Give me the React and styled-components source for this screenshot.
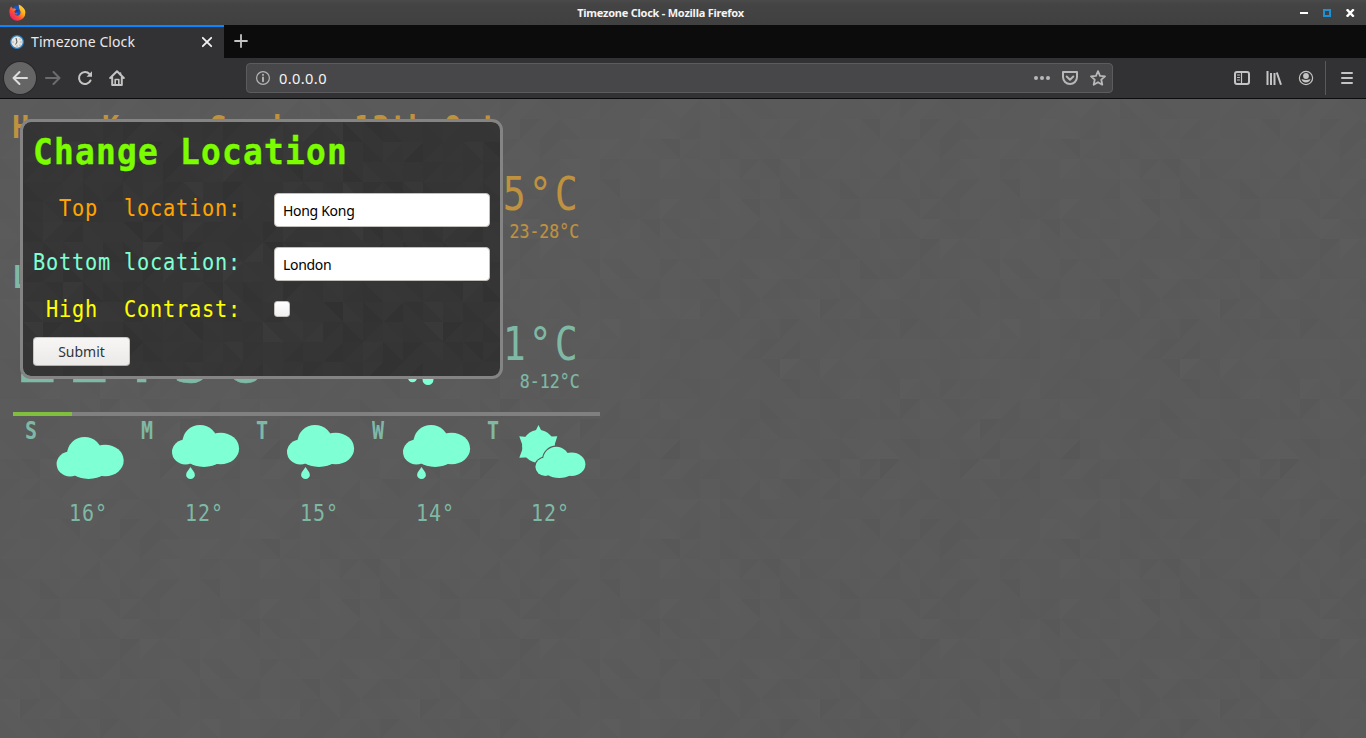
import React from "react";
import styled, { createGlobalStyle } from "styled-components";

const MONO = '"DejaVu Sans Mono", "Liberation Mono", monospace';
const SANS = '"Noto Sans", "Open Sans", sans-serif';

/* Seeded mosaic of 20px squares and triangles, tiled every 400px. */
function mosaic(seed, strength, size) {
  let s = seed;
  const rnd = () => {
    s = (s * 1664525 + 1013904223) % 4294967296;
    return s / 4294967296;
  };
  let shapes = "";
  for (let y = 0; y < size; y += 20) {
    for (let x = 0; x < size; x += 20) {
      const corners = [[x, y], [x + 20, y], [x + 20, y + 20], [x, y + 20]];
      const skip = Math.floor(rnd() * 4);
      const tri = corners.filter((_, i) => i !== skip).map((p) => p.join(",")).join(" ");
      const a = (rnd() * strength).toFixed(3);
      const b = (rnd() * strength * 0.45).toFixed(3);
      const tone = rnd() > 0.45 ? "#000" : "#fff";
      shapes += `<rect x="${x}" y="${y}" width="20" height="20" opacity="${b}"/>`;
      shapes += `<polygon points="${tri}" fill="${tone}" opacity="${tone === "#fff" ? (a * 0.3).toFixed(3) : a}"/>`;
    }
  }
  const svg = `<svg xmlns="http://www.w3.org/2000/svg" width="${size}" height="${size}" shape-rendering="crispEdges">${shapes}</svg>`;
  return `url("data:image/svg+xml,${encodeURIComponent(svg)}")`;
}

const pageMosaic = mosaic(77, 0.026, 400);
const dialogMosaic = mosaic(77, 0.065, 400);

const GlobalStyle = createGlobalStyle`
  * { box-sizing: border-box; }
  body { margin: 0; background: #5a5a5a; overflow: hidden; font-family: ${SANS}; }
`;

const Window = styled.div`
  width: 1366px;
  height: 738px;
  display: flex;
  flex-direction: column;
`;

const TitleBar = styled.header`
  height: 25px;
  flex: none;
  display: grid;
  grid-template-columns: 57px 1fr 100px;
  align-items: center;
  padding: 0 11px 0 9px;
  background: linear-gradient(#4a4a4a, #444 15%, #404040);
`;

const WindowTitle = styled.div`
  text-align: center;
  font: 700 11px/25px ${SANS};
  color: #f4f4f4;
  letter-spacing: -0.24px;
`;

const WindowButtons = styled.div`
  display: flex;
  justify-content: flex-end;
  gap: 14px;
`;

const TabStrip = styled.nav`
  height: 33px;
  flex: none;
  display: flex;
  background: #0c0c0c;
`;

const Tab = styled.div`
  width: 224px;
  display: flex;
  align-items: center;
  padding: 0 11px 2px 10px;
  border-top: 2px solid #0a84ff;
  background: #323234;
  color: #e9e9ea;
  font: 14px/29px ${SANS};
`;

const TabLabel = styled.span`
  flex: 1;
  margin-left: 7px;
  letter-spacing: 0.1px;
`;

const NewTab = styled.div`
  width: 34px;
  display: grid;
  place-items: center;
  padding-bottom: 2px;
`;

const Toolbar = styled.div`
  height: 41px;
  flex: none;
  display: flex;
  align-items: center;
  padding: 0 3px 0 4px;
  background: #323234;
  border-bottom: 1px solid #0c0c0d;
`;

const BackButton = styled.div`
  width: 32px;
  height: 32px;
  margin-right: 1px;
  border-radius: 50%;
  display: grid;
  place-items: center;
  background: #656566;
  box-shadow: 0 0 0 1px #29292b;
`;

const ToolIcon = styled.div`
  width: 32px;
  height: 32px;
  display: grid;
  place-items: center;
  opacity: ${(p) => (p.$dim ? 0.4 : 1)};
`;

const AddressBar = styled.div`
  width: 867px;
  height: 30px;
  margin-left: 113px;
  display: flex;
  align-items: center;
  padding: 0 6px 0 8px;
  background: #474749;
  border: 1px solid #5c5c5e;
  border-radius: 4px;
`;

const Address = styled.span`
  flex: 1;
  margin-left: 8px;
  font: 14.6px/28px ${SANS};
  letter-spacing: 0.4px;
  color: #f4f4f5;
`;

const AddressActions = styled.div`
  display: flex;
  gap: 12px;
`;

const ToolbarEnd = styled.div`
  margin-left: auto;
  display: flex;
  align-items: center;
`;

const Divider = styled.div`
  width: 1px;
  height: 34px;
  margin: 0 5px 0 3px;
  background: #59595b;
`;

const Page = styled.main`
  position: relative;
  flex: 1;
  padding: 13px 0 0 13px;
  background-color: #5b5b5b;
  background-image: ${pageMosaic};
`;

/* Condensed monospace: each character occupies $step pixels. */
const Mono = styled.span`
  display: block;
  width: max-content;
  white-space: pre;
  font-family: ${MONO};
  font-size: ${(p) => p.$size}px;
  font-weight: ${(p) => (p.$bold ? 700 : 400)};
  line-height: ${(p) => p.$line}px;
  letter-spacing: ${(p) => p.$step / (p.$squeeze || 0.86) - p.$size * 0.602}px;
  transform: scaleX(${(p) => p.$squeeze || 0.86});
  transform-origin: ${(p) => p.$from || "left"} center;
  color: ${(p) => p.$color || "inherit"};
  -webkit-text-stroke: ${(p) => p.$stroke || 0}px currentColor;
`;

const Place = styled.section`
  width: 587px;
  height: 150px;
  color: ${(p) => p.$color};
`;

const PlaceName = styled.div`
  margin-left: -1.5px;
`;

const PlaceRow = styled.div`
  height: 120px;
  display: grid;
  grid-template-columns: 342px 100px 126px;
`;

const TimeCell = styled.div`
  padding: 14px 0 0 3px;
`;

const SkyCell = styled.div`
  padding-top: 6px;
`;

const TempCell = styled.div`
  display: flex;
  flex-direction: column;
  align-items: flex-end;
  padding-top: 27px;
`;

const TempNow = styled.div`
  padding-right: 0.5px;
`;

const TempRange = styled.div`
  padding-right: 1.5px;
`;

const Progress = styled.div`
  width: 587px;
  height: 4px;
  background: #808080;
`;

const ProgressFill = styled.div`
  width: 59px;
  height: 4px;
  background: #80be3e;
`;

const Forecast = styled.div`
  display: grid;
  grid-template-columns: repeat(5, 115.5px);
  padding-left: 12px;
  color: #7fb9a5;
`;

const Day = styled.div`
  display: grid;
  grid-template-columns: 31px 1fr;
`;

const DayIcon = styled.div`
  height: 81px;
  padding-top: 9px;
`;

const DayTemp = styled.div`
  grid-column: 1 / 3;
  padding-left: 44px;
`;

const Dialog = styled.form`
  position: absolute;
  left: 20px;
  top: 20px;
  width: 483px;
  height: 260px;
  padding: 0 10px;
  border: 3px solid #848484;
  border-radius: 11px;
  background-color: #363636;
  background-image: ${dialogMosaic};
  background-clip: padding-box;
`;

const DialogTitle = styled.h1`
  margin: 0;
  padding-left: 0;
`;

const Field = styled.label`
  height: ${(p) => p.$height}px;
  display: grid;
  grid-template-columns: 241px 216px;
  align-items: center;
`;

const FieldName = styled.div`
  padding-bottom: ${(p) => p.$lift}px;
`;

const TextInput = styled.input`
  width: 216px;
  height: 34px;
  margin: 0;
  padding: 0 8px;
  border: 1px solid #c2beb9;
  border-radius: 4px;
  background: #fff;
  color: #000;
  font: 14px ${SANS};
  letter-spacing: -0.3px;
`;

const Checkbox = styled.input`
  appearance: none;
  width: 16px;
  height: 16px;
  margin: 0;
  border: 1px solid #c4bfba;
  border-radius: 3px;
  background: linear-gradient(#fff, #f0f0f0);
`;

const SubmitButton = styled.button`
  display: block;
  width: 97px;
  height: 29px;
  margin-top: 8px;
  padding: 0;
  border: 1px solid #c9c5c1;
  border-bottom-color: #b5b1ad;
  border-radius: 4px;
  background: linear-gradient(#f7f6f5, #ebeae9);
  color: #2f3639;
  font: 14px/26px ${SANS};
`;

const FirefoxLogo = () => (
  <svg width="17" height="17" viewBox="0 0 17 17">
    <defs>
      <linearGradient id="flame" x1="1" y1="0" x2="0.15" y2="0.9">
        <stop offset="0" stopColor="#fff04a" />
        <stop offset=".4" stopColor="#ffae18" />
        <stop offset=".7" stopColor="#ff4a35" />
        <stop offset="1" stopColor="#e8206c" />
      </linearGradient>
    </defs>
    <circle cx="8.5" cy="7.8" r="6.4" fill="#1754c4" />
    <path fill="url(#flame)" d="M2.2 2.4 3.4 4.5 6 4.6 7.2 6 5.2 7.2 6 9.2 8.8 9.6C7.7 11 6.3 10.5 5.6 10c.8 2 3.6 2.2 5 .8 1.4-1.5 1.2-3.7 0-5.1C10 4 9.8 2.4 9.7.4c3.8 2 6.7 4.3 6.7 8.2a8 8 0 0 1-16 .2C.1 6 .8 4 2.2 2.4z" />
    <path fill="#173b91" d="M7 6h3L9 7.5H6z" />
  </svg>
);

const ClockIcon = () => (
  <svg width="14" height="14" viewBox="0 0 14 14">
    <circle cx="7" cy="7" r="6.3" fill="#e9e6df" stroke="#2c82c9" strokeWidth="1.2" />
    <path d="M6 3 7 7 5.6 9.5" stroke="#555" strokeWidth="1" fill="none" />
    <g fill="#777"><circle cx="11" cy="7" r=".6" /><circle cx="3" cy="7" r=".6" /><circle cx="7" cy="11" r=".6" /><circle cx="10" cy="4" r=".5" /><circle cx="10" cy="10" r=".5" /></g>
  </svg>
);

const Glyph = ({ d, size = 16, width = 2, color = "#c4c4c5", children }) => (
  <svg width={size} height={size} viewBox={`0 0 ${size} ${size}`} fill="none" stroke={color} strokeWidth={width} strokeLinecap="round" strokeLinejoin="round">
    {d && <path d={d} />}
    {children}
  </svg>
);

const CloudShape = () => (
  <>
    <ellipse cx="13.4" cy="27" rx="13.4" ry="12.4" />
    <ellipse cx="28" cy="17.4" rx="17.6" ry="17.4" />
    <ellipse cx="48.6" cy="23.5" rx="18.5" ry="15.8" />
    <ellipse cx="32" cy="27" rx="22" ry="15" />
  </>
);

const DROP = "M18.5 42c1.6 3 4.4 5 4.4 7.9a4.4 4.2 0 0 1-8.8 0c0-2.9 2.8-4.9 4.4-7.9z";

const Sky = ({ kind }) => (
  <svg width="69" height="58" viewBox="0 0 69 58" fill="#7fffd4">
    {kind === "cloud" && <g transform="translate(.6 12)"><CloudShape /></g>}
    {kind === "rain" && <><CloudShape /><path d={DROP} /></>}
    {kind === "mixed" && (
      <g transform="translate(1 0)">
        <circle cx="19.5" cy="21.5" r="16.4" />
        <path d="M19.5 0l4.5 9H15zM38.3 11.2l-3 9.5-8-9zM38.3 32.8l-10-1 7.5-8zM.3 11.2l10.5 1-7 9zM.3 32.8l3.5-9.5 7 9z" />
        <g transform="translate(16.4 21.7) scale(.745)" stroke="#5a5a5a" strokeWidth="3"><CloudShape /></g>
        <g transform="translate(16.4 21.7) scale(.745)"><CloudShape /></g>
      </g>
    )}
  </svg>
);

const HeavyRain = () => (
  <svg width="84" height="90" viewBox="0 0 84 90" fill="#7fffd4">
    <g transform="scale(1.2)"><CloudShape /></g>
    <path d="M57.5 70c2 4 4.5 6 4.5 9a4.500 4.200 0 0 1-9 0c0-3 2.500-5 4.500-9z" />
    <path d="M73 70c2 4 5.5 7 5.5 10.5a5.500 5.500 0 0 1-11 0c0-3.500 3.500-6.500 5.500-10.500z" />
  </svg>
);

const PlaceBlock = ({ color, heading, time, temp, range, sky }) => (
  <Place $color={color}>
    <PlaceName><Mono $size={32} $bold $step={18} $line={31} $squeeze={0.9}>{heading}</Mono></PlaceName>
    <PlaceRow>
      <TimeCell><Mono $size={90} $step={52} $line={88} $squeeze={0.8} $stroke={0.6}>{time}</Mono></TimeCell>
      <SkyCell>{sky}</SkyCell>
      <TempCell>
        <TempNow><Mono $size={46.6} $step={26} $line={48} $from="right" $squeeze={0.82}>{temp}</Mono></TempNow>
        <TempRange><Mono $size={19.2} $step={10} $line={28} $from="right" $stroke={0.2}>{range}</Mono></TempRange>
      </TempCell>
    </PlaceRow>
  </Place>
);

const days = [
  ["S", "cloud", "16°"],
  ["M", "rain", "12°"],
  ["T", "rain", "15°"],
  ["W", "rain", "14°"],
  ["T", "mixed", "12°"],
];

const fieldText = { $size: 23.3, $step: 13, $line: 30, $squeeze: 0.87, $stroke: 0.1 };

export default function App() {
  return (
    <Window>
      <GlobalStyle />
      <TitleBar>
        <FirefoxLogo />
        <WindowTitle>Timezone Clock - Mozilla Firefox</WindowTitle>
        <WindowButtons>
          <svg width="9" height="8"><path d="M0 3h8v2H0z" fill="#fff" /></svg>
          <svg width="9" height="8"><path d="M1 1h6v6H1z" fill="none" stroke="#1f8fd6" strokeWidth="2" /></svg>
          <svg width="9" height="8"><path d="M.8.3 7.7 7.7M7.7.3.8 7.7" stroke="#fff" strokeWidth="2.4" /></svg>
        </WindowButtons>
      </TitleBar>
      <TabStrip>
        <Tab>
          <ClockIcon />
          <TabLabel>Timezone Clock</TabLabel>
          <Glyph size={12} width={1.8} color="#f2f2f3" d="M1.8 1.8l8.4 8.4M10.2 1.8l-8.4 8.4" />
        </Tab>
        <NewTab><Glyph size={14} width={1.8} d="M7 1v12M1 7h12" /></NewTab>
      </TabStrip>
      <Toolbar>
        <BackButton><Glyph color="#dcdcdc" d="M15 8H1.5M7.5 2 1.5 8l6 6" /></BackButton>
        <ToolIcon $dim><Glyph d="M1 8h13.5M8.5 2l6 6-6 6" /></ToolIcon>
        <ToolIcon>
          <Glyph><path d="M13.5 10.5A6 6 0 1 1 12.5 4" /><path d="M9.5 6.8H15V1.3z" fill="#c4c4c5" stroke="none" /></Glyph>
        </ToolIcon>
        <ToolIcon>
          <Glyph><path d="M1.2 8 8 1.2 14.8 8M3.2 7.5V15h9.6V7.5" /><path d="M6.2 14V9.5h3.6V14M11.5 3v2" strokeWidth="1.6" /></Glyph>
        </ToolIcon>
        <AddressBar>
          <Glyph width={1.2} color="#b4b4b5"><circle cx="8" cy="8" r="6.4" /><path d="M8 7.5v3.7M8 4.6v.3" strokeWidth="1.9" /></Glyph>
          <Address>0.0.0.0</Address>
          <AddressActions>
            <Glyph width={0}><g fill="#b8b8b9"><circle cx="2" cy="8" r="2" /><circle cx="8" cy="8" r="2" /><circle cx="14" cy="8" r="2" /></g></Glyph>
            <Glyph color="#b8b8b9" d="M1 2h14v5a7 7 0 0 1-14 0zM4.7 6.5 8 9.7l3.3-3.2" />
            <Glyph color="#b8b8b9" width={1.8} d="M8 1.2l2 4.6 5 .5-3.7 3.4 1 5L8 12.2l-4.3 2.5 1-5L1 6.3l5-.5z" />
          </AddressActions>
        </AddressBar>
        <ToolbarEnd>
          <ToolIcon><Glyph><rect x="1" y="2" width="14" height="12" rx="2" /><path d="M7.5 2v12" strokeWidth="1.2" /><path d="M3.5 5h2M3.5 7.5h2M3.5 10h2" strokeWidth="1" /></Glyph></ToolIcon>
          <ToolIcon><Glyph><g strokeLinecap="butt"><path d="M1.5 1v14M8.500 3v12M10.800 2.500 15 14.800" /><path d="M5 3v12" /></g></Glyph></ToolIcon>
          <ToolIcon><Glyph width={1.2}><circle cx="8" cy="8" r="6.6" /><circle cx="8" cy="6" r="2.9" fill="#c4c4c5" stroke="none" /><path d="M3.5 9c1.2 0 1.700 1 4.500 1s3.300-1 4.500-1a4.600 4.300 0 0 1-9 0z" fill="#c4c4c5" stroke="none" /></Glyph></ToolIcon>
          <Divider />
          <ToolIcon><Glyph size={12} d="M1 1h10M1 6h10M1 11h10" /></ToolIcon>
        </ToolbarEnd>
      </Toolbar>
      <Page>
        <PlaceBlock color="#bf923f" heading="Hong Kong, Sunday, 13th Oct" time="05:58" temp="25°C" range="23-28°C" sky={null} />
        <PlaceBlock color="#7fb9a5" heading="London, Saturday, 12th Oct" time="22:58" temp="11°C" range="8-12°C" sky={<HeavyRain />} />
        <Progress><ProgressFill /></Progress>
        <Forecast>
          {days.map(([day, sky, temp], i) => (
            <Day key={i}>
              <Mono $size={25} $bold $step={13.5} $line={29} $squeeze={0.8}>{day}</Mono>
              <DayIcon><Sky kind={sky} /></DayIcon>
              <DayTemp><Mono $size={23.5} $step={13} $line={33} $squeeze={0.85}>{temp}</Mono></DayTemp>
            </Day>
          ))}
        </Forecast>
        <Dialog onSubmit={(e) => e.preventDefault()}>
          <DialogTitle>
            <Mono $size={35.7} $bold $step={21} $line={59} $color="#7cfc00" $squeeze={0.92} $stroke={0.4}>Change Location</Mono>
          </DialogTitle>
          <Field $height={58}>
            <FieldName $lift={4}><Mono {...fieldText} $color="#ffa500">{"  Top  location:"}</Mono></FieldName>
            <TextInput defaultValue="Hong Kong" />
          </Field>
          <Field $height={50}>
            <FieldName $lift={4}><Mono {...fieldText} $color="#7fffd4">{"Bottom location:"}</Mono></FieldName>
            <TextInput defaultValue="London" />
          </Field>
          <Field $height={40}>
            <FieldName $lift={0}><Mono {...fieldText} $color="#ffff00">{" High  Contrast:"}</Mono></FieldName>
            <Checkbox type="checkbox" />
          </Field>
          <SubmitButton>Submit</SubmitButton>
        </Dialog>
      </Page>
    </Window>
  );
}
